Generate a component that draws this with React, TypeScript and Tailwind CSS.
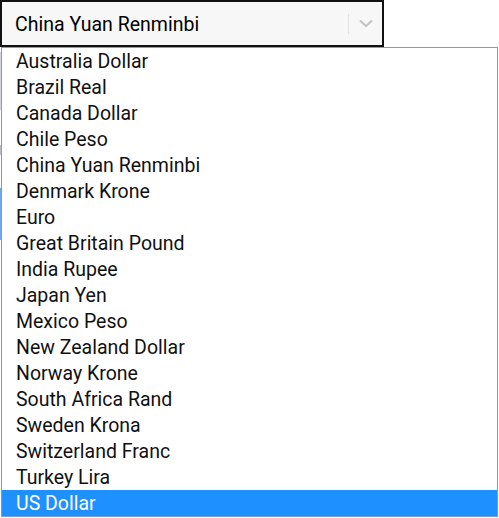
import React from "react";

const items = [
  "Australia Dollar",
  "Brazil Real",
  "Canada Dollar",
  "Chile Peso",
  "China Yuan Renminbi",
  "Denmark Krone",
  "Euro",
  "Great Britain Pound",
  "India Rupee",
  "Japan Yen",
  "Mexico Peso",
  "New Zealand Dollar",
  "Norway Krone",
  "South Africa Rand",
  "Sweden Krona",
  "Switzerland Franc",
  "Turkey Lira",
  "US Dollar",
];

export default function App() {
  return (
    <div
      className="relative w-[499px] h-[518px] bg-white overflow-hidden"
      style={{ fontFamily: "Roboto, 'Noto Sans', sans-serif" }}
    >
      <div className="w-[384px] h-[47px] border-2 border-[#111] bg-[#f7f7f7] flex items-center">
        <span className="pl-[13px] pt-[3px] text-[19.5px] text-black flex-1 leading-none">China Yuan Renminbi</span>
        <div className="w-px h-[20px] bg-[#e2e2e2]" />
        <div className="w-[33px] flex justify-center">
          <svg width="14" height="9" viewBox="0 0 14 9">
            <path d="M1 1.5 L7 7 L13 1.5" fill="none" stroke="#c4c4c4" strokeWidth="2.2" />
          </svg>
        </div>
      </div>
      <div className="flex flex-col w-px pt-[5px]">
        <div className="h-[58px] bg-[#d4d8de]" />
        <div className="h-[35px]" />
        <div className="h-[10px] bg-[#b8bcc4]" />
        <div className="h-[33px]" />
        <div className="h-[52px] bg-[#6fa8e8]" />
      </div>
      <div className="absolute left-[1px] top-[47px] w-[497px] border border-[#7f9dc0] bg-white">
        {items.map((it) => (
          <div
            key={it}
            className={
              "h-[26px] flex items-center pl-[14px] pt-[2px] text-[19.5px] leading-none " +
              (it === "US Dollar" ? "bg-[#1e90ff] text-white" : "text-[#111]")
            }
          >
            {it}
          </div>
        ))}
      </div>
    </div>
  );
}
